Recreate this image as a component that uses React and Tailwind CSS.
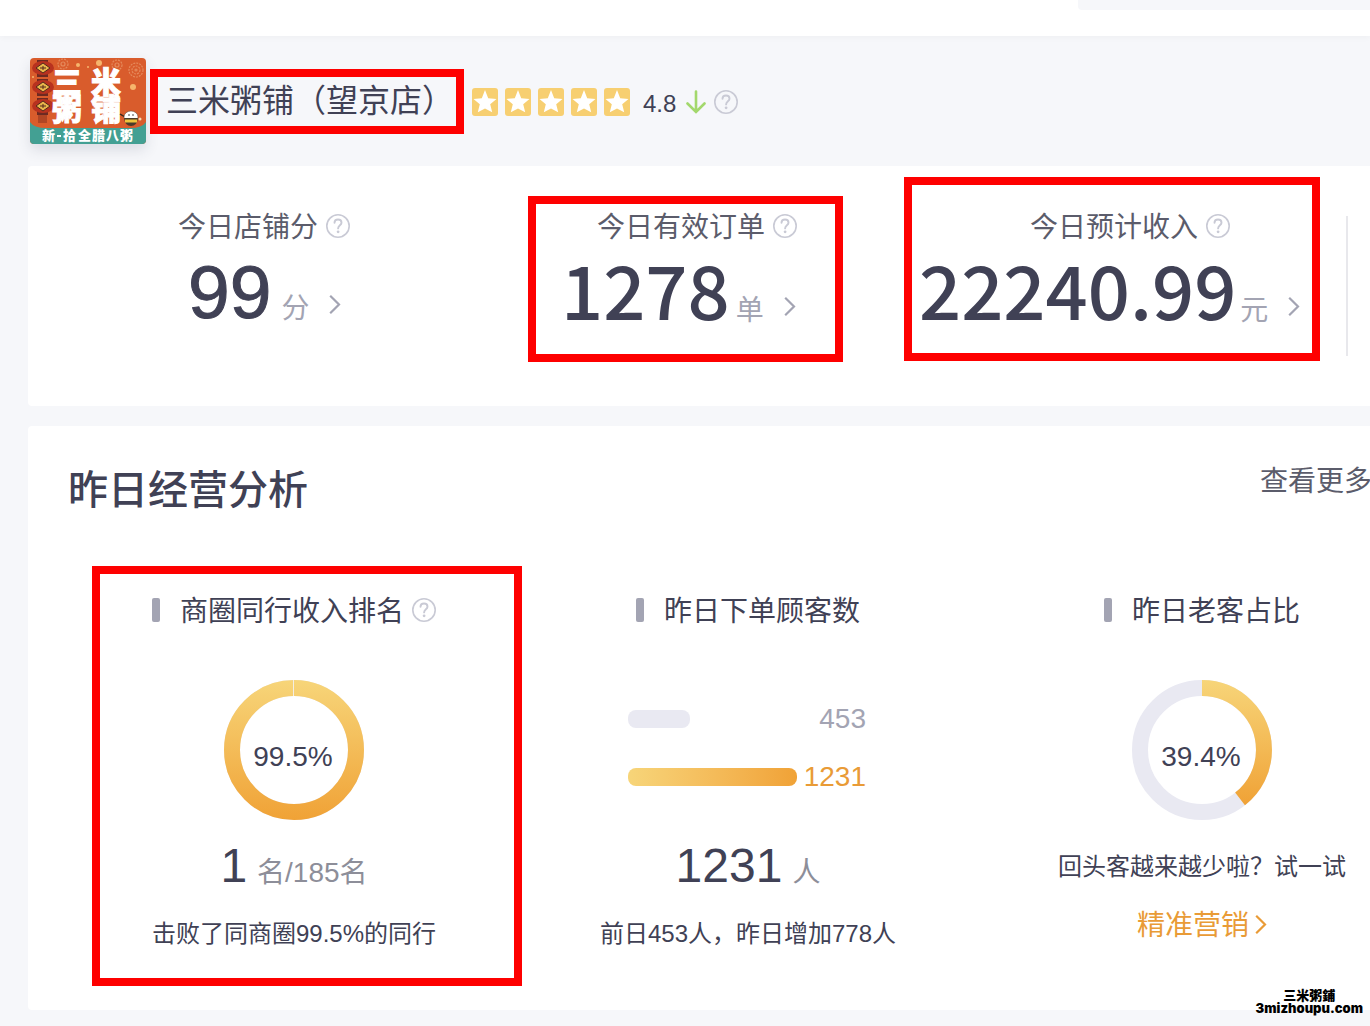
import { useId } from "react";
import clsx from "clsx";

const STAR_COUNT = 5;

function ShopLogo() {
  return (
    <svg
      viewBox="0 0 116 86"
      className="h-[86px] w-[116px] shrink-0 rounded-[4px] shadow-[0_6px_14px_rgba(60,64,90,0.14)]"
      role="img"
      aria-label="三米粥铺"
    >
      <rect width="116" height="86" fill="#d95c2c" />
      {/* sky decorations */}
      <g fill="none" stroke="#e58a5c" strokeWidth="1.2">
        <circle cx="33" cy="6" r="5" strokeDasharray="2 1" />
        <circle cx="33" cy="6" r="2" />
        <circle cx="87" cy="7" r="5" strokeDasharray="2 1" />
        <circle cx="87" cy="7" r="2" />
        <circle cx="106" cy="12" r="7" strokeDasharray="2 1" />
        <circle cx="106" cy="12" r="4" strokeDasharray="2 1" />
        <circle cx="106" cy="12" r="1" />
      </g>
      <g fill="#f6b56c">
        <circle cx="69" cy="5" r="3" />
        <circle cx="48" cy="7" r="2" />
        <circle cx="103" cy="29" r="3" />
        <circle cx="58" cy="9" r="1" />
        <circle cx="3" cy="19" r="1" />
      </g>
      {/* lanterns */}
      {[10, 29, 48].map((y) => (
        <g key={y}>
          <rect x="7" y={y - 8} width="11" height="17" fill="#6d2a22" />
          <ellipse cx="13" cy={y} rx="11" ry="7" fill="#b8321f" />
          <path
            d={`M13 ${y - 5} l7 5 l-7 5 l-7 -5 z`}
            fill="#e8b64a"
            stroke="#53291d"
            strokeWidth="1"
          />
          <path d={`M10 ${y} h6 M13 ${y - 2} v4`} stroke="#53291d" strokeWidth="1" />
        </g>
      ))}
      <rect x="8" y="57" width="9" height="8" fill="#b04524" />
      <g
        fill="#fff"
        fontFamily="'Noto Sans CJK SC', sans-serif"
        fontWeight="900"
      >
        <g fontSize="30" stroke="#fff" strokeWidth="1">
          <text x="22" y="35">三</text>
          <text x="61" y="35">米</text>
          <text x="22" y="62">粥</text>
          <text x="61" y="62">铺</text>
        </g>
        <path d="M0 64 Q4 70 16 70 H100 Q112 70 116 64 V86 H0 Z" fill="#43a093" />
        <text x="12" y="82" fontSize="13">新</text>
        <rect x="27" y="77" width="4" height="2" />
        <text y="82" fontSize="13" x="33 48 62 76 90">拾全腊八粥</text>
      </g>
      {/* porridge mascot */}
      <path d="M90 56 q6 4 8 3" stroke="#3d2a20" strokeWidth="1.5" fill="none" />
      <ellipse cx="101" cy="59" rx="7" ry="6" fill="#fff" stroke="#5a4636" strokeWidth="0.5" />
      <path d="M94 60 h14 q-1 8 -7 8 q-6 0 -7 -8z" fill="#4a3b2a" />
      <path d="M95 63 h12" stroke="#f0c33c" strokeWidth="3" />
      <circle cx="99" cy="57" r="0.8" fill="#333" />
      <circle cx="103" cy="57" r="0.8" fill="#333" />
      <circle cx="110" cy="61" r="1.5" fill="#f7d9b0" />
    </svg>
  );
}

function Help() {
  return (
    <button type="button" aria-label="说明" className="shrink-0">
      <svg
        viewBox="0 0 24 24"
        className="size-6 text-[#c9cad5]"
        fill="none"
        stroke="currentColor"
        strokeLinecap="round"
      >
        <circle cx="12" cy="12" r="11.2" strokeWidth="1.6" />
        <path
          d="M8.5 8.8c0-2 1.5-3.3 3.5-3.3s3.5 1.3 3.5 3.2c0 2.5-3.4 2.7-3.4 5.7"
          strokeWidth="1.9"
        />
        <circle cx="12.1" cy="17.8" r="1.4" fill="currentColor" stroke="none" />
      </svg>
    </button>
  );
}

function Chevron({ className }) {
  return (
    <svg
      viewBox="0 0 12 24"
      className={clsx("h-6 w-3 shrink-0", className)}
      fill="none"
      stroke="currentColor"
      strokeWidth="2.2"
    >
      <path d="M1.2 1.7 L10 10.5 L1.2 19.3" />
    </svg>
  );
}

function Star() {
  return (
    <svg viewBox="0 0 26 28" className="h-7 w-[26px]">
      <rect width="26" height="28" rx="3" fill="#f7cf71" />
      <path
        d="M13 2 L16.2 10.2 L24.5 10.9 L18.2 16.3 L20.2 24.3 L13 20.4 L5.8 24.3 L7.8 16.3 L1.5 10.9 L9.8 10.2 Z"
        fill="#fff"
      />
    </svg>
  );
}

function Metric({ label, value, unit, className, labelClass, valueClass, rowClass }) {
  return (
    <div className={className}>
      <div className={clsx("flex items-center gap-2", labelClass)}>
        <span className="pt-1 text-[28px] leading-8 whitespace-nowrap text-[#5b5c6b]">{label}</span>
        <Help />
      </div>
      <a href="#detail" className={clsx("flex items-baseline text-[#a3a4b3]", rowClass)}>
        <span className={clsx("leading-[80px] text-[#404155]", valueClass)}>{value}</span>
        <span className="text-[28px] leading-8">{unit}</span>
        <Chevron className="ml-5" />
      </a>
    </div>
  );
}

function CardTitle({ children, help }) {
  return (
    <h3 className="flex items-center text-[28px] leading-8 whitespace-nowrap">
      <span className="mr-5 h-6 w-2 rounded-[2px] bg-[#a3a4b3]" />
      <span className="pt-1">{children}</span>
      {help && (
        <span className="ml-2 flex">
          <Help />
        </span>
      )}
    </h3>
  );
}

function Donut({ percent }) {
  const id = useId();
  const r = 62;
  const length = 2 * Math.PI * r;
  // the gradient ends where the arc ends
  const end = percent < 50 ? 70 - 70 * Math.cos((percent / 100) * 2 * Math.PI) : 140;

  return (
    <div className="mt-[52px] grid size-[140px] place-items-center">
      <svg viewBox="0 0 140 140" className="col-start-1 row-start-1 size-[140px]">
        <defs>
          <linearGradient id={id} gradientUnits="userSpaceOnUse" x1="0" y1="0" x2="0" y2={end}>
            <stop offset="0" stopColor="#f7d579" />
            <stop offset="1" stopColor="#f0a236" />
          </linearGradient>
        </defs>
        <circle cx="70" cy="70" r={r} fill="none" stroke="#e9e9f2" strokeWidth="16" />
        {percent > 99 ? (
          <>
            <circle cx="70" cy="70" r={r} fill="none" stroke={`url(#${id})`} strokeWidth="16" />
            <path d="M69.5 0 V16" stroke="#f3eee4" strokeWidth="1" />
          </>
        ) : (
          <path
            d={`M70 8 A${r} ${r} 0 0 1 70 132 A${r} ${r} 0 0 1 70 8`}
            fill="none"
            stroke={`url(#${id})`}
            strokeWidth="16"
            strokeDasharray={`${(length * percent) / 100} ${length}`}
          />
        )}
      </svg>
      <span className="col-start-1 row-start-1 pt-3.5 pr-0.5 text-[28px] leading-8">
        {percent}%
      </span>
    </div>
  );
}

function BigNumber({ value, unit, className }) {
  return (
    <p className={clsx("flex items-baseline gap-2.5 whitespace-nowrap", className)}>
      <span className="text-5xl leading-[48px]">{value}</span>
      <span className="text-[28px] leading-8 text-[#8d8e99]">{unit}</span>
    </p>
  );
}

const customers = [
  { value: 453, share: 26, bar: "bg-[#e9e9f2]", text: "text-[#a3a4b3]" },
  {
    value: 1231,
    share: 71,
    bar: "bg-linear-to-r from-[#f7d579] to-[#f0a236]",
    text: "text-[#e99b36]",
  },
];

export default function App() {
  return (
    <div className="relative min-h-screen overflow-hidden bg-[#f6f7fa] font-['Liberation_Sans','Noto_Sans_CJK_SC',sans-serif] text-[#404155]">
      <header className="flex h-9 justify-end bg-white shadow-[0_2px_6px_rgba(0,0,0,0.03)]">
        <div className="h-2.5 w-[292px] rounded-bl-[4px] bg-[#f6f7fa]" />
      </header>

      <section className="flex items-center py-[22px] pl-[30px]">
        <ShopLogo />
        <h1 className="ml-1 border-8 border-[#fe0000] py-1 pr-0.5 pl-2 text-[32px] leading-[41px] whitespace-nowrap">
          三米粥铺（望京店）
        </h1>
        <div className="ml-2 flex items-center pt-0.5">
          <div className="flex gap-[7px]" role="img" aria-label="4.8 星">
            {Array.from({ length: STAR_COUNT }, (_, i) => (
              <Star key={i} />
            ))}
          </div>
          <span className="ml-[13px] pt-1 text-2xl">4.8</span>
          <svg
            viewBox="0 0 20 24"
            className="mr-2 ml-2.5 h-6 w-5"
            fill="none"
            stroke="#a3d86c"
            strokeWidth="2.6"
            strokeLinecap="round"
          >
            <path d="M10 1.5 V21.5 M1.5 13.5 L10 22 L18.5 13.5" />
          </svg>
          <Help />
        </div>
      </section>

      <main className="pb-4 pl-7">
        <section className="grid grid-cols-[500fr_315fr_61fr_416fr_50fr] items-start rounded-l-[4px] bg-white pb-11">
          <Metric
            label="今日店铺分"
            value="99"
            unit="分"
            className="pt-[42px] pl-[150px]"
            rowClass="pt-2 pl-2.5"
            valueClass="mr-2.5 text-[75px] [-webkit-text-stroke:1px_#404155]"
          />
          <Metric
            label="今日有效订单"
            value="1278"
            unit="单"
            className="mt-[30px] border-8 border-[#fe0000] pt-1 pb-[26px]"
            labelClass="pl-[61px]"
            rowClass="pt-1 pl-[25px]"
            valueClass="mr-1.5 font-['Noto_Sans_CJK_SC',sans-serif] text-[74px] font-medium"
          />
          <div />
          <Metric
            label="今日预计收入"
            value="22240.99"
            unit="元"
            className="mt-[11px] border-8 border-[#fe0000] pt-[23px] pb-[25px]"
            labelClass="pl-[118px]"
            rowClass="pt-1 pl-[7px]"
            valueClass="mr-1 font-['Noto_Sans_CJK_SC',sans-serif] text-[74px] font-medium"
          />
          <div className="mt-[50px] ml-[26px] h-[140px] w-0.5 bg-[#e8e8ec]" />
        </section>

        <section className="mt-5 rounded-l-[4px] bg-white pb-6">
          <div className="flex h-[140px] items-start justify-between pl-10">
            <h2 className="pt-10 text-[40px] leading-[48px] font-medium">昨日经营分析</h2>
            <a
              href="#more"
              className="-mr-0.5 pt-10 text-[28px] leading-8 whitespace-nowrap text-[#5b5c6b]"
            >
              查看更多
            </a>
          </div>

          <div className="grid grid-cols-[430fr_452fr_396fr] items-start pl-16">
            <article className="flex flex-col items-center border-8 border-[#fe0000] pt-[18px] pr-[26px] pb-7">
              <CardTitle help>商圈同行收入排名</CardTitle>
              <Donut percent={99.5} />
              <BigNumber value="1" unit="名/185名" className="mt-[22px]" />
              <p className="mt-7 text-2xl leading-8 whitespace-nowrap">
                击败了同商圈99.5%的同行
              </p>
            </article>

            <article className="flex flex-col items-center pt-[26px]">
              <CardTitle>昨日下单顾客数</CardTitle>
              <ul className="mt-[75px] flex w-60 flex-col gap-[26px] pr-0.5">
                {customers.map((c) => (
                  <li key={c.value} className="flex items-center justify-between text-[28px] leading-8">
                    <span
                      className={clsx("h-[18px] rounded-lg", c.bar)}
                      style={{ width: `${c.share}%` }}
                    />
                    <span className={c.text}>{c.value}</span>
                  </li>
                ))}
              </ul>
              <BigNumber value="1231" unit="人" className="mt-[49px]" />
              <p className="mt-7 text-2xl leading-8 whitespace-nowrap">
                前日453人，昨日增加778人
              </p>
            </article>

            <article className="flex flex-col items-center pt-[26px] pl-[60px]">
              <CardTitle>昨日老客占比</CardTitle>
              <Donut percent={39.4} />
              <p className="mt-[31px] text-2xl leading-8 whitespace-nowrap">
                回头客越来越少啦？试一试
              </p>
              <a
                href="#marketing"
                className="mt-[27px] flex items-center gap-1.5 text-[28px] leading-8 text-[#e99b36]"
              >
                精准营销
                <Chevron />
              </a>
            </article>
          </div>
        </section>
      </main>

      <div className="absolute right-[7px] bottom-[11px] text-center font-['Inter','Noto_Sans_CJK_SC',sans-serif] text-[13px] leading-[13px] font-black text-black">
        <p>三米粥鋪</p>
        <p>3mizhoupu.com</p>
      </div>
    </div>
  );
}
